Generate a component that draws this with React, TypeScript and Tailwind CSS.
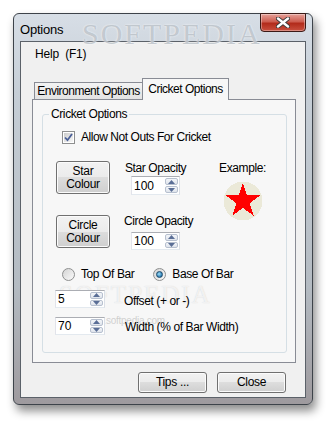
import React from 'react';

const font = "font-['Liberation_Sans',Arial,sans-serif] text-[11px] tracking-[-0.25px] text-black";

function WinButton({ label, className }: { label: React.ReactNode; className: string }) {
  return (
    <div
      className={`flex flex-col items-center justify-center rounded-[3px] border border-[#707070] bg-[linear-gradient(to_bottom,#f2f2f2_0%,#ebebeb_50%,#dddddd_50%,#cfcfcf_100%)] shadow-[inset_0_0_0_1px_#fbfbfb] leading-[13px] ${className}`}
    >
      {label}
    </div>
  );
}

function Arrow({ up }: { up?: boolean }) {
  return (
    <svg width="7" height="4" viewBox="0 0 7 4">
      <polygon points={up ? '3.5,0 7,4 0,4' : '0,0 7,0 3.5,4'} fill="#5a6e96" />
    </svg>
  );
}

function Spin({ value, className }: { value: string; className: string }) {
  return (
    <div className={`flex border border-[#abadb3] border-b-[#e3e9ef] border-l-[#e2e3ea] border-r-[#dbdfe6] bg-white ${className}`}>
      <div className="flex-1 pl-[2px] flex items-center text-[12px] tracking-normal">{value}</div>
      <div className="flex flex-col w-[15px] p-px gap-px">
        <div className="flex-1 flex items-center justify-center rounded-[2px] border border-[#b7c0cf] bg-[linear-gradient(to_bottom,#f4f6f9,#dfe4ec)]">
          <Arrow up />
        </div>
        <div className="flex-1 flex items-center justify-center rounded-[2px] border border-[#b7c0cf] bg-[linear-gradient(to_bottom,#f4f6f9,#dfe4ec)]">
          <Arrow />
        </div>
      </div>
    </div>
  );
}

function Radio({ checked }: { checked?: boolean }) {
  return (
    <div className="w-[13px] h-[13px] rounded-full border border-[#8e8f8f] bg-[linear-gradient(135deg,#d4d4d4,#fafafa)] flex items-center justify-center">
      {checked && (
        <div className="w-[7px] h-[7px] rounded-full border border-[#1b4a6b] bg-[radial-gradient(circle_at_40%_40%,#9fe0fb,#2b7ab0_70%,#1e5880)]" />
      )}
    </div>
  );
}

function StarExample() {
  const pts = '20,2 24.11,14.34 37.12,14.44 26.66,22.16 30.58,34.56 20,27 9.42,34.56 13.34,22.16 2.88,14.44 15.89,14.34';
  return (
    <svg width="40" height="40" viewBox="0 0 40 40" shapeRendering="crispEdges">
      <circle cx="20" cy="20" r="19.5" fill="#ebe9d8" />
      <polygon points={pts} fill="#ff0000" />
    </svg>
  );
}

export default function App() {
  return (
    <div className={`w-[334px] h-[430px] bg-white overflow-hidden pt-[13px] pl-[13px] ${font}`}>
      <div className="relative w-[300px] h-[392px] rounded-[6px] border border-[#3d434a] bg-[linear-gradient(to_bottom,#d7dee6_0%,#c6ced6_20%,#b4bbc2_70%,#9e9a9e_100%)] shadow-[3px_6px_10px_rgba(0,0,0,0.45)] flex flex-col px-[6px] pb-[6px]">
        <div className="relative flex justify-between h-[27px]">
          <span className="mt-[6px] text-[13px] tracking-[-0.2px]">Options</span>
          <span className="absolute left-[62px] -top-[3px] font-['Liberation_Serif',serif] text-[30px] tracking-[2px] text-[#aeb6be]/70 [text-shadow:0_0_2px_rgba(255,255,255,0.9)]">
            SOFTPEDIA
          </span>
          <div className="relative w-[46px] h-[19px] -mt-px rounded-b-[4px] border border-[#3c1a16] bg-[linear-gradient(to_bottom,#e6a199_0%,#cd5d50_45%,#b22b1b_55%,#c9503f_100%)] shadow-[inset_0_0_0_1px_rgba(255,255,255,0.35)] flex items-center justify-center">
            <svg width="14" height="11" viewBox="0 0 14 11">
              <path d="M2 1.5 L12 9.5 M12 1.5 L2 9.5" stroke="#3a3a3a" strokeWidth="4.2" strokeLinecap="round" />
              <path d="M2 1.5 L12 9.5 M12 1.5 L2 9.5" stroke="#ffffff" strokeWidth="2.4" strokeLinecap="round" />
            </svg>
          </div>
        </div>

        <div className="flex-1 border border-[#5b6169] bg-[#f0f0f0] flex flex-col">
          <div className="h-[24px] flex items-center pl-[14px] text-[12px] tracking-[-0.2px]">Help&nbsp;&nbsp;(F1)</div>

          <div className="pt-[13px] pl-[11px] pr-[9px]">
            <div className="flex items-end h-[20px] pl-[2px]">
              <div className="h-[17px] w-[109px] border border-b-0 border-[#898c95] bg-[linear-gradient(to_bottom,#f3f3f3,#e3e3e3)] flex items-center justify-center text-[12px] tracking-[-0.5px]">
                Environment Options
              </div>
              <div className="relative z-10 -ml-px -mb-px h-[22px] w-[87px] border border-b-0 border-[#898c95] bg-[#f7f7f7] flex items-center justify-center pb-[2px] text-[12px] tracking-[-0.5px]">
                Cricket Options
              </div>
            </div>

            <div className="relative h-[264px] border border-[#898c95] bg-[#f7f7f7] pt-[14px] pl-[9px] pr-[8px]">
              <div className="relative h-[239px] border border-[#d5dfe5] rounded-[3px]">
                <span className="absolute -top-[8px] left-[6px] px-[2px] bg-[#f7f7f7] leading-[14px] text-[12px] tracking-[-0.4px]">Cricket Options</span>

                <span className="absolute left-[16px] top-[166px] font-['Liberation_Serif',serif] text-[25px] leading-[28px] tracking-[2px] text-white/70 [text-shadow:0_0_1px_rgba(120,120,120,0.3)] pointer-events-none">
                  SOFTPEDIA
                </span>
                <span className="absolute left-[40px] top-[200px] text-[10px] leading-[12px] text-[#b5b5b5]/60 pointer-events-none">
                  www.softpedia.com
                </span>

                <div className="relative flex items-center mt-[13px] pl-[19px] gap-[6px]">
                  <div className="w-[13px] h-[13px] border border-[#8e8f8f] bg-white p-px">
                    <div className="w-full h-full bg-[linear-gradient(135deg,#cdcdcd,#f7f7f7)] flex items-center justify-center">
                      <svg width="9" height="9" viewBox="0 0 9 9">
                        <path d="M1 4.5 L3.5 7.2 L8 1" fill="none" stroke="#4a5f97" strokeWidth="1.8" />
                      </svg>
                    </div>
                  </div>
                  <span className="text-[12px] tracking-[-0.45px]">Allow Not Outs For Cricket</span>
                </div>

                <div className="relative flex mt-[15px]">
                  <div className="flex flex-col gap-[20px] pl-[13px]">
                    <div className="flex">
                      <WinButton className="w-[54px] h-[33px] text-[12px] tracking-[-0.3px]" label={<><span>Star</span><span>Colour</span></>} />
                      <div className="ml-[15px] flex flex-col">
                        <span className="h-[14px] leading-[14px] text-[12px] tracking-[-0.4px]">Star Opacity</span>
                        <Spin value="100" className="ml-[6px] mt-px w-[49px] h-[19px]" />
                      </div>
                    </div>
                    <div className="flex">
                      <WinButton className="w-[54px] h-[33px] text-[12px] tracking-[-0.3px]" label={<><span>Circle</span><span>Colour</span></>} />
                      <div className="ml-[14px] flex flex-col">
                        <span className="h-[14px] -mt-px leading-[14px] text-[12px] tracking-[-0.4px]">Circle Opacity</span>
                        <Spin value="100" className="ml-[7px] mt-[4px] w-[49px] h-[18px]" />
                      </div>
                    </div>
                  </div>
                  <div className="ml-[26px] flex flex-col">
                    <span className="h-[14px] leading-[14px] text-[12px] tracking-[-0.4px]">Example:</span>
                    <div className="ml-[4px] mt-[6px]">
                      <StarExample />
                    </div>
                  </div>
                </div>

                <div className="relative flex items-center mt-[15px] pl-[19px]">
                  <Radio />
                  <span className="ml-[6px] text-[12px] tracking-[-0.4px]">Top Of Bar</span>
                  <div className="ml-[19px]"><Radio checked /></div>
                  <span className="ml-[6px] text-[12px] tracking-[-0.4px]">Base Of Bar</span>
                </div>

                <div className="relative flex items-center mt-[7px] pl-[12px]">
                  <Spin value="5" className="w-[50px] h-[18px]" />
                  <span className="ml-[19px] mt-[3px] text-[12px] leading-[14px] tracking-[-0.4px]">Offset (+ or -)</span>
                </div>
                <div className="relative flex items-center mt-[9px] pl-[12px]">
                  <Spin value="70" className="w-[50px] h-[18px]" />
                  <span className="ml-[20px] mt-[1px] text-[12px] leading-[14px] tracking-[-0.4px]">Width (% of Bar Width)</span>
                </div>
              </div>
            </div>
          </div>

          <div className="flex justify-end gap-[10px] mt-[9px] pr-[19px]">
            <WinButton className="w-[69px] h-[21px] text-[12px] tracking-[-0.3px]" label="Tips ..." />
            <WinButton className="w-[69px] h-[21px] text-[12px] tracking-[-0.3px]" label="Close" />
          </div>
        </div>
      </div>
    </div>
  );
}
